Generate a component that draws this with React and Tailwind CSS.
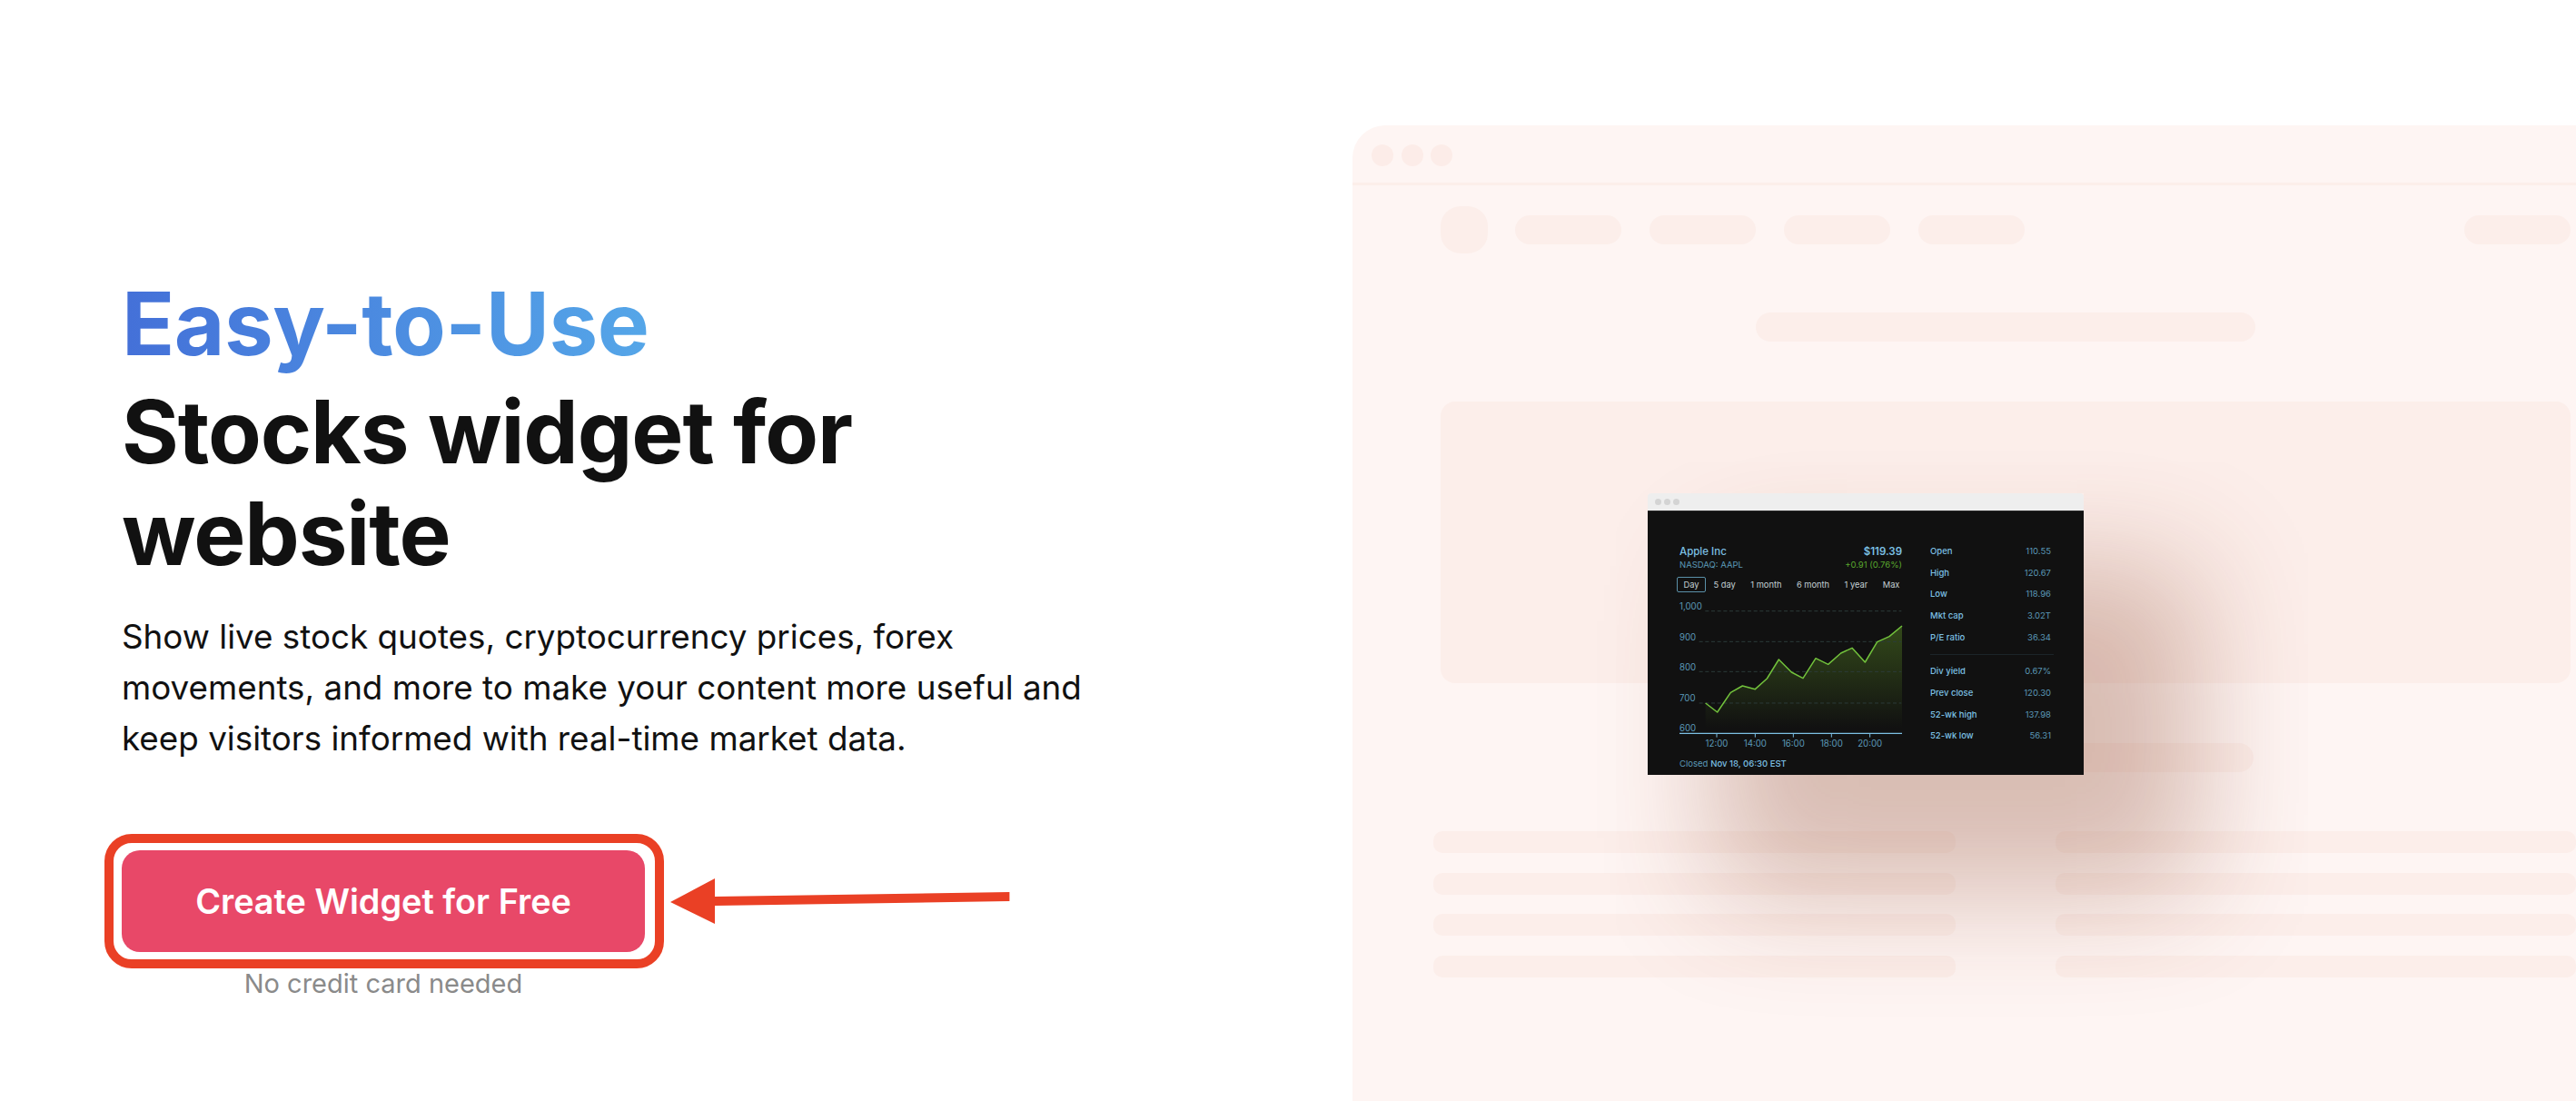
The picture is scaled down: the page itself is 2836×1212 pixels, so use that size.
const LINE = [[233,732],[272,762],[316,697],[355,675],[397,686],[436,651],[475,588],[517,630],[555,650],[597,584],[638,604],[680,567],[717,550],[760,597],[800,530],[840,512],[882,477]];
const linePts = LINE.map((p) => p.join(",")).join(" ");

const STATS_A = [["Open","110.55"],["High","120.67"],["Low","118.96"],["Mkt cap","3.02T"],["P/E ratio","36.34"]];
const STATS_B = [["Div yield","0.67%"],["Prev close","120.30"],["52-wk high","137.98"],["52-wk low","56.31"]];

function Stat({ label, value }) {
  return (
    <div className="flex h-[23.75px] items-center justify-between pr-[3px]">
      <span className="font-medium text-[#7cc0e4]">{label}</span>
      <span className="text-[#5b99b8]">{value}</span>
    </div>
  );
}

function Chart() {
  return (
    <svg viewBox="147 390 735 490" className="mt-[8px] block h-[163.33px] w-[245px] overflow-visible" style={{ fontFamily: "Inter, sans-serif" }}>
      <defs>
        <linearGradient id="area" x1="0" y1="477" x2="0" y2="815" gradientUnits="userSpaceOnUse">
          <stop offset="0" stopColor="#33491a" />
          <stop offset="1" stopColor="#33491a" stopOpacity="0" />
        </linearGradient>
      </defs>
      <polygon points={`233,832 ${linePts} 882,832`} fill="url(#area)" />
      {[[428,232],[529,212],[628,212],[732,212]].map(([y,x]) => (
        <line key={y} x1={x} x2="880" y1={y} y2={y} stroke="#2c3b3a" strokeWidth="3" strokeDasharray="12 8" />
      ))}
      <polyline points={linePts} fill="none" stroke="#72c23c" strokeWidth="4.5" strokeLinejoin="round" />
      {[["1,000",423],["900",525],["800",624],["700",726],["600",825]].map(([t,y]) => (
        <text key={t} x="147" y={y} fontSize="29" fill="#5b99b8">{t}</text>
      ))}
      <line x1="147" x2="882" y1="832" y2="832" stroke="#7cc0e4" strokeWidth="4" />
      {[[270,"12:00"],[397,"14:00"],[523,"16:00"],[649,"18:00"],[776,"20:00"]].map(([x,t]) => (
        <g key={t}>
          <line x1={x} x2={x} y1="832" y2="845" stroke="#7cc0e4" strokeWidth="3" />
          <text x={x} y="876" fontSize="29" textAnchor="middle" fill="#5b99b8">{t}</text>
        </g>
      ))}
    </svg>
  );
}

function Widget() {
  return (
    <div className="absolute left-[325px] top-[405px] w-[480px] font-['Inter',sans-serif] shadow-[100px_105px_130px_25px_rgba(130,55,30,0.3)]">
      <div className="flex h-[20px] items-center gap-[3px] rounded-t-[4px] border-b border-[#2a2a2a] bg-[#eeeeee] pl-[7.5px]">
        <span className="size-[7px] rounded-full bg-[#d4d4d4]" />
        <span className="size-[7px] rounded-full bg-[#d4d4d4]" />
        <span className="size-[7px] rounded-full bg-[#d4d4d4]" />
      </div>
      <div className="flex h-[290px] gap-[31px] bg-[#111111] pl-[35px] pt-[32px] text-[9.5px]">
        <div className="w-[245px] pt-[5px]">
          <div className="flex h-[15px] items-center justify-between text-[11.5px] font-medium text-[#7cc0e4]">
            <span>Apple Inc</span>
            <span className="font-semibold">$119.39</span>
          </div>
          <div className="flex h-[15px] items-center justify-between text-[9.5px] text-[#5b99b8]">
            <span>NASDAQ: AAPL</span>
            <span className="text-[#5aa82e]">+0.91 (0.76%)</span>
          </div>
          <div className="ml-[-3px] mt-[5px] flex h-[17px] items-center gap-[16.5px] text-[9.3px] text-[#c3d0d4]">
            <span className="mr-[-8px] flex h-[17px] w-[32px] items-center justify-center rounded-[2px] border border-[#5a90a8]">Day</span>
            <span>5 day</span>
            <span>1 month</span>
            <span>6 month</span>
            <span>1 year</span>
            <span>Max</span>
          </div>
          <Chart />
          <div className="mt-[11px] flex h-[14px] items-center gap-[3px] text-[9.5px] text-[#5b99b8]">
            <span>Closed</span>
            <span className="font-medium text-[#7cc0e4]">Nov 18, 06:30 EST</span>
          </div>
        </div>
        <div className="w-[136px]">
          {STATS_A.map(([l, v]) => <Stat key={l} label={l} value={v} />)}
          <div className="my-[6px] h-[1.5px] bg-[#1c2529]" />
          {STATS_B.map(([l, v]) => <Stat key={l} label={l} value={v} />)}
        </div>
      </div>
    </div>
  );
}

function Panel() {
  return (
    <div className="relative mt-[138px] min-w-0 flex-1 rounded-tl-[36px] bg-[#fef5f3]">
      <div className="flex h-[66px] items-center gap-[8.5px] border-b-[3px] border-[#fceeea] pl-[21px] pt-[2px]">
        <span className="size-[24px] rounded-full bg-[#fcecE8]" />
        <span className="size-[24px] rounded-full bg-[#fcecE8]" />
        <span className="size-[24px] rounded-full bg-[#fcecE8]" />
      </div>
      <div className="ml-[96.5px] mr-[6px] mt-[23px] flex h-[52px] items-center">
        <div className="size-[52px] rounded-[22px] bg-[#fceeea]" />
        <div className="ml-[30.5px] flex gap-[31px]">
          <div className="h-[32px] w-[117px] rounded-full bg-[#fceeea]" />
          <div className="h-[32px] w-[117px] rounded-full bg-[#fceeea]" />
          <div className="h-[32px] w-[117px] rounded-full bg-[#fceeea]" />
          <div className="h-[32px] w-[117px] rounded-full bg-[#fceeea]" />
        </div>
        <div className="ml-auto h-[32px] w-[117px] rounded-full bg-[#fceeea]" />
      </div>
      <div className="ml-[444px] mt-[65px] h-[32px] w-[550px] rounded-full bg-[#fceeea]" />
      <div className="ml-[96.5px] mr-[6px] mt-[66px] h-[310px] rounded-[16px] bg-[#fceeea]" />
      <div className="ml-[444px] mt-[66px] h-[32px] w-[548px] rounded-full bg-[#fceeea]" />
      <div className="ml-[88.5px] mt-[65px] grid grid-cols-[575.5px_1fr] gap-x-[109.5px] gap-y-[21.67px]">
        {Array.from({ length: 8 }).map((_, i) => (
          <div key={i} className="h-[24px] rounded-[10px] bg-[#fceeea]" />
        ))}
      </div>
      <Widget />
    </div>
  );
}

function Hero() {
  return (
    <div className="w-[1489px] shrink-0 pl-[134px] pt-[300px] text-[#111111]">
      <div className="w-fit bg-linear-to-r from-[#4470d8] to-[#55a6e8] bg-clip-text text-[96px] font-bold leading-[112px] tracking-[-0.5px] text-transparent">
        Easy-to-Use
      </div>
      <h1 className="mt-[7px] text-[96px] font-bold leading-[112px] tracking-[-1.1px]">
        Stocks widget for
        <br />
        website
      </h1>
      <p className="mt-[30px] text-[36.8px] leading-[56px]">
        Show live stock quotes, cryptocurrency prices, forex
        <br />
        movements, and more to make your content more useful and
        <br />
        keep visitors informed with real-time market data.
      </p>
      <div className="relative mt-[95px] w-[576px]">
        <button className="flex h-[112px] w-full items-center justify-center rounded-[20px] bg-[#e84868] text-[37.8px] font-semibold text-white">
          Create Widget for Free
        </button>
        <div className="absolute -bottom-[18px] -left-[19px] -right-[21px] -top-[18px] rounded-[30px] border-[10px] border-[#ea4025]" />
        <svg className="absolute left-[604px] top-[30px] h-[70px] w-[390px] overflow-visible" viewBox="738 966 390 70">
          <polygon points="738,993 787,967 787,987 1111.4,982 1111.4,992 787,997 787,1017" fill="#ea4025" />
        </svg>
      </div>
      <div className="mt-[15px] w-[576px] text-center text-[29px] leading-[40px] text-[#8a8a8a]">No credit card needed</div>
    </div>
  );
}

export default function App() {
  return (
    <div className="flex h-[1212px] w-[2836px] overflow-hidden bg-white font-['Inter',sans-serif]">
      <Hero />
      <Panel />
    </div>
  );
}
